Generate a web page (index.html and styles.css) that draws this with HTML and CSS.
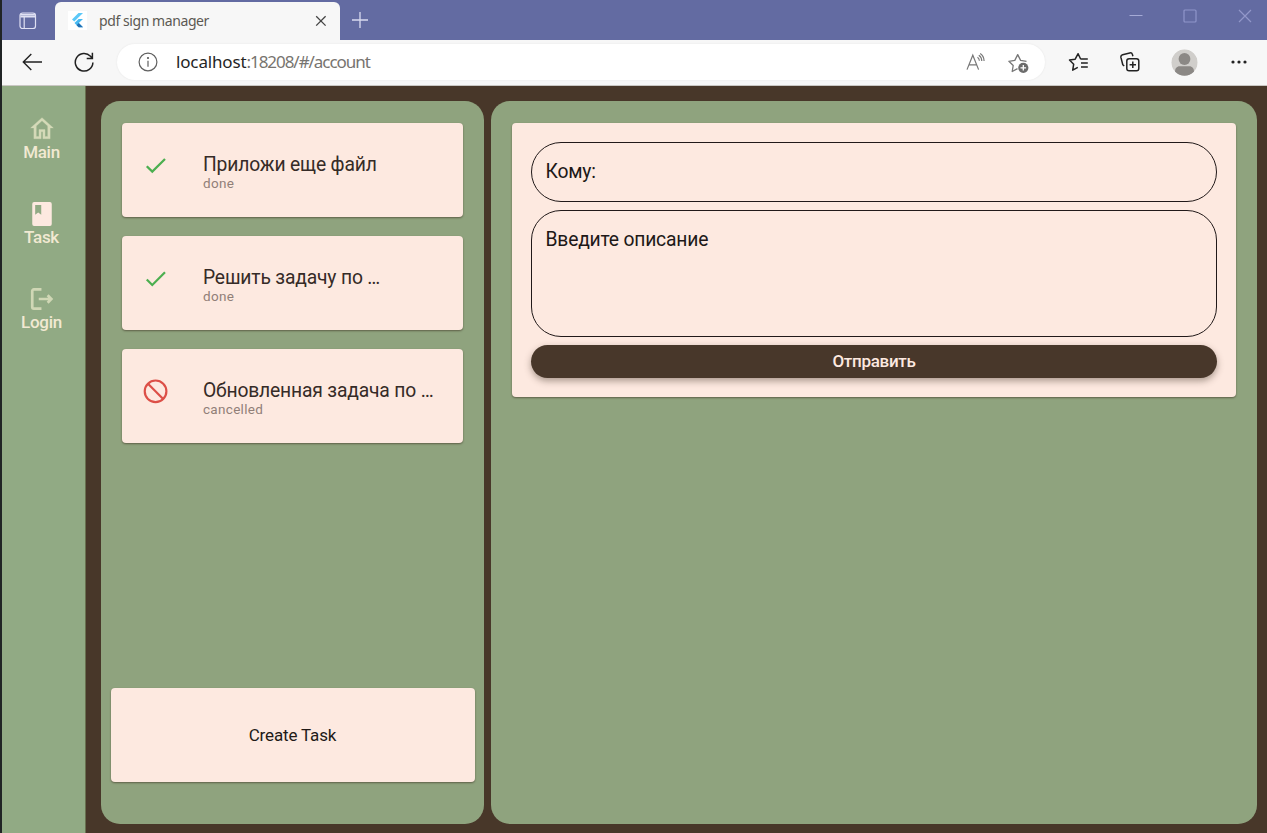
FILE: index.html
```
<!DOCTYPE html>
<html lang="ru">
<head>
<meta charset="utf-8">
<title>pdf sign manager</title>
<link rel="stylesheet" href="styles.css">
</head>
<body>
<div class="window">
  <header class="titlebar">
    <svg class="tab-menu" width="18" height="18" viewBox="0 0 18 18" fill="none" stroke="#dfe0f3" stroke-width="1.2"><rect x="1" y="1" width="15.5" height="15.5" rx="2.6"/><path d="M1.600 2.600h14.300" stroke-width="1.6"/><path d="M1.400 4.500h14.700" stroke-width="2"/><path d="M5.200 5v11"/></svg>
    <div class="tab">
      <span class="favicon"><svg width="18" height="18" viewBox="0 0 18 18"><path d="M10.5 2H15L6.3 10.6 4 8.4z" fill="#5cc8f8"/><path d="M10.6 8H15l-4.2 4.1 4.2 4.1h-4.4L6.5 12.1z" fill="#46b9f2"/><path d="M8.6 14.2l2.2-2.1L15 16.2h-4.4z" fill="#2270b4"/></svg></span>
      <span class="tab-title">pdf sign manager</span>
      <svg class="tab-close" width="12" height="12" viewBox="0 0 12 12" stroke="#444" stroke-width="1.3"><path d="M1.2 1.2l9.4 9.4M10.6 1.2L1.2 10.6"/></svg>
    </div>
    <svg class="new-tab" width="18" height="18" viewBox="0 0 18 18" stroke="#d9daf0" stroke-width="1.3"><path d="M9 1v16M1 9h16"/></svg>
    <div class="window-controls">
      <svg width="14" height="14" viewBox="0 0 14 14" stroke="#a5aad6"><path d="M.5 6.5h13"/></svg>
      <svg width="14" height="14" viewBox="0 0 14 14" fill="none" stroke="#8f95ca" stroke-width="1.2"><rect x="1" y="1" width="12" height="12" rx="1"/></svg>
      <svg width="14" height="14" viewBox="0 0 14 14" stroke="#9297c9" stroke-width="1.2"><path d="M1 1l12 12M13 1L1 13"/></svg>
    </div>
  </header>

  <div class="toolbar">
    <svg class="back" width="20" height="18" viewBox="0 0 20 18" fill="none" stroke="#222" stroke-width="1.4"><path d="M20 9H1.4M9.3 1L1.3 9l8 8"/></svg>
    <svg class="reload" width="20" height="20" viewBox="0 0 20 20" fill="none" stroke="#222" stroke-width="1.5"><path d="M18.9 10.5A8.8 8.8 0 1 1 16.5 4.2L18 6M18.4 .8v5.6h-5.7"/></svg>
    <div class="address">
      <svg class="info" width="20" height="20" viewBox="0 0 20 20" fill="none" stroke="#606060" stroke-width="1.2"><circle cx="10" cy="10" r="8.9"/><path d="M10 8.7v6" /><circle cx="10" cy="6" r=".5" fill="#555"/></svg>
      <span class="url"><span class="host">localhost</span>:18208/#/account</span>
      <svg class="read" width="20" height="18" viewBox="0 0 20 18" fill="none" stroke="#777" stroke-width="1.2"><path d="M1 16.6L6.8 2.2l5.8 14.4M3 11.8h7.6M11.5 4.200c1.200.8 1.800 2 1.900 3.600M12.800 2.300c1.900 1.200 2.900 3.200 3 5.700M14.200 .600c2.400 1.600 3.800 4.200 3.900 7.400" /></svg>
      <svg class="favorite" width="22" height="21" viewBox="0 0 22 21" fill="none" stroke="#777" stroke-width="1.3" stroke-linejoin="round"><path d="M9.5 15.6l-5.3 2.9 1-6-4.3-4.2 5.9-.9 2.9-5.800 2.900 5.800 5.900.9"/><circle cx="15.3" cy="14.8" r="5.1" fill="#6c6c6c" stroke="none"/><path d="M15.3 12v5.600M12.500 14.800h5.600" stroke="#fff"/></svg>
    </div>
    <svg class="fav-list" width="21" height="20" viewBox="0 0 21 20" fill="none" stroke="#222" stroke-width="1.5" stroke-linejoin="round"><path d="M9.8 15.3l-5.1 2.9 1-6L1.5 8l5.7-.8 2.900-5.500L12.600 7M12.500 7h7.300M13 11h6.800M13 15h6.800"/></svg>
    <svg class="collections" width="20" height="20" viewBox="0 0 20 20" fill="none" stroke="#222" stroke-width="1.5" stroke-linejoin="round"><rect x="6.8" y="6.8" width="12" height="12" rx="2.3"/><path d="M12.8 9.6v6.4M9.6 12.8H16M4.2 14L2.8 12.8.9 5.4C.7 4 1.2 3.1 2.6 2.7L9.8.9c1.3-.3 2.2.2 2.6 1.5l.5 1.9"/></svg>
    <svg class="avatar" width="27" height="27" viewBox="0 0 27 27"><defs><clipPath id="face"><circle cx="13.5" cy="13.5" r="13.2"/></clipPath></defs><g clip-path="url(#face)"><circle cx="13.5" cy="13.5" r="13.2" fill="#d0cecb"/><circle cx="13.5" cy="10" r="5.9" fill="#8b8885"/><path d="M4 23c0-3.500 1.800-5.700 4.600-5.700h9.800c2.800 0 4.600 2.200 4.600 5.700v5H4z" fill="#8b8885"/></g></svg>
    <svg class="more" width="16" height="4" viewBox="0 0 16 4" fill="#222"><circle cx="2" cy="2" r="1.6"/><circle cx="8" cy="2" r="1.600"/><circle cx="14" cy="2" r="1.600"/></svg>
  </div>

  <div class="app">
    <nav class="sidebar">
      <a class="nav-item"><svg width="28" height="26" viewBox="0 0 24 24" fill="#d5dab8" stroke="#d5dab8" stroke-width=".3"><path d="M12 5.200l5.300 4.800V19.800h-2.500v-6.500H9.200v6.500H6.700V10L12 5.200M12 2.300L1.500 11.800h3v10h6.700v-6.500h1.600v6.500h6.700v-10h3L12 2.300z" transform="translate(0 -.8)"/></svg><span>Main</span></a>
      <a class="nav-item"><svg width="26" height="26" viewBox="0 0 24 24" fill="#fde9e0"><path fill-rule="evenodd" d="M4.700 1h14.600a1.700 1.700 0 0 1 1.700 1.700v18.600a1.700 1.700 0 0 1-1.700 1.700H4.700A1.700 1.700 0 0 1 3 21.300V2.700A1.700 1.700 0 0 1 4.700 1zM5.700 3.600v9l2.800-1.900 2.800 1.900v-9z"/></svg><span>Task</span></a>
      <a class="nav-item"><svg width="26" height="26" viewBox="0 0 24 24" fill="none" stroke="#d0d7b5" stroke-width="2.500"><path d="M11.500 3.200H4.500a1.500 1.500 0 0 0-1.500 1.500v14.600a1.500 1.500 0 0 0 1.500 1.500h7M9 12h12M17.200 8.600l3.400 3.400-3.400 3.400"/></svg><span>Login</span></a>
    </nav>
    <main class="workspace">
      <section class="panel tasks">
        <div class="task-list">
          <article class="card task"><svg class="status" width="26" height="26" viewBox="0 0 24 24" fill="#4caf50"><path d="M9 16.170L4.830 12l-1.420 1.410L9 19 21 7l-1.410-1.410z" transform="translate(-.8 -.1) scale(1.040)"/></svg><div><h2>Приложи еще файл</h2><p>done</p></div></article>
          <article class="card task"><svg class="status" width="26" height="26" viewBox="0 0 24 24" fill="#4caf50"><path d="M9 16.170L4.830 12l-1.420 1.410L9 19 21 7l-1.410-1.410z" transform="translate(-.8 .2) scale(1.040)"/></svg><div><h2>Решить задачу по …</h2><p>done</p></div></article>
          <article class="card task"><svg class="status" width="26" height="26" viewBox="0 0 24 24" fill="none" stroke="#dc4f47" stroke-width="2"><circle cx="11.600" cy="12.300" r="10"/><path d="M4.600 5.300l14 14"/></svg><div><h2>Обновленная задача по …</h2><p>cancelled</p></div></article>
        </div>
        <button class="card create"><span>Create Task</span></button>
      </section>
      <section class="panel compose">
        <form class="card form">
          <div class="field"><span>Кому:</span></div>
          <div class="field description"><span>Введите описание</span></div>
          <button class="send" type="button"><span>Отправить</span></button>
        </form>
      </section>
    </main>
  </div>
</div>
</body>
</html>
```
FILE: styles.css
```
* { box-sizing: border-box; }
body { margin: 0; font-family: Roboto, sans-serif; }
button { border: 0; padding: 0; font-family: inherit; }
svg { display: block; flex: none; }
h2, p { margin: 0; font-weight: 400; white-space: nowrap; }

.window { width: 1267px; height: 833px; display: flex; flex-direction: column; overflow: hidden; border-left: 2px solid #202425; background: #483729; }

.titlebar { height: 40px; flex: none; display: flex; background: #636ba2; }
.tab-menu { margin: 12px 0 0 17px; }
.tab { width: 284.500px; height: 38px; margin: 2px 0 0 18px; padding-bottom: 1px; display: flex; align-items: center; background: #f7f7f7; border-radius: 6px 6px 0 0; }
.favicon { width: 19px; height: 19px; margin-left: 13px; background: #fff; }
.tab-title { width: 206px; margin-left: 12px; font: 14px "Noto Sans", sans-serif; letter-spacing: -.42px; color: #5c5953; white-space: nowrap; }
.tab-close { margin: 1px 0 0 10px; }
.new-tab { margin: 11px 0 0 11.500px; }
.window-controls { display: flex; gap: 40.500px; margin: 9px 15.500px 0 auto; }

.toolbar { height: 46px; flex: none; padding-bottom: 1px; display: flex; align-items: center; background: #f7f7f7; border-bottom: 1px solid #c9c7c3; }
.back { margin-left: 20px; }
.reload { margin-left: 32px; }
.address { width: 928px; height: 36px; margin-left: 23px; display: flex; align-items: center; border-radius: 18px; background: #fff; box-shadow: 0 0 2px #e4e4e4; }
.info { margin-left: 21px; }
.url { margin: -2px 0 0 18px; font: 17px "Noto Sans", sans-serif; letter-spacing: -1.050px; color: #77746f; white-space: nowrap; }
.host { color: #252525; letter-spacing: -.15px; }
.read { margin-left: auto; }
.favorite { margin: 3px 15px 0 22px; }
.fav-list { margin-left: 23px; }
.collections { margin-left: 31px; }
.avatar { margin-left: 31px; }
.more { margin-left: 33px; }

.app { flex: 1; display: flex; min-height: 0; }
.sidebar { width: 84px; flex: none; padding: 30px 4px 0 0; display: flex; flex-direction: column; gap: 40px; background: #91aa84; border-right: 1px solid #68704f; }
.nav-item { height: 45px; display: flex; flex-direction: column; align-items: center; font-size: 17px; font-weight: 500; line-height: 20px; letter-spacing: -.3px; color: #f1e9d2; }
.workspace { flex: 1; display: flex; gap: 7px; padding: 15px 10px 9px 15px; }
.panel { background: #8fa37e; border-radius: 19px; }
.tasks { width: 383px; padding: 22px 9.500px 42px; display: flex; flex-direction: column; justify-content: space-between; }
.compose { flex: 1; padding: 22px 21px; }

.card { background: #fde9e0; border-radius: 4px; box-shadow: 0 1px 2px rgba(55, 40, 25, .55); }
.task-list { display: flex; flex-direction: column; gap: 19px; padding: 0 11.500px; }
.task { height: 94px; display: flex; padding: 29px 0 0 21px; }
.status { margin-right: 34px; }
.task h2 { height: 24px; font-size: 19.300px; line-height: 25px; letter-spacing: -.17px; color: #352b27; }
.task p { height: 17px; font-size: 13.500px; line-height: 15px; letter-spacing: .3px; color: #917f78; }
.create { height: 94px; padding-bottom: 1px; font-size: 17px; letter-spacing: -.15px; color: #211a17; }

.form { height: 274px; padding: 19px; display: flex; flex-direction: column; }
.field { height: 60px; padding: 16px 13.500px; border: 1.200px solid #211919; border-radius: 30px; font-size: 19.300px; line-height: 25px; letter-spacing: -.2px; color: #201817; }
.description { height: 128px; margin-top: 8px; }
.send { height: 33px; margin-top: 8px; padding-bottom: 1px; border-radius: 17px; background: #48372a; color: #fde9e0; font-size: 17px; font-weight: 500; letter-spacing: -.3px; box-shadow: 0 3px 7px rgba(72, 55, 42, .45); }
```
